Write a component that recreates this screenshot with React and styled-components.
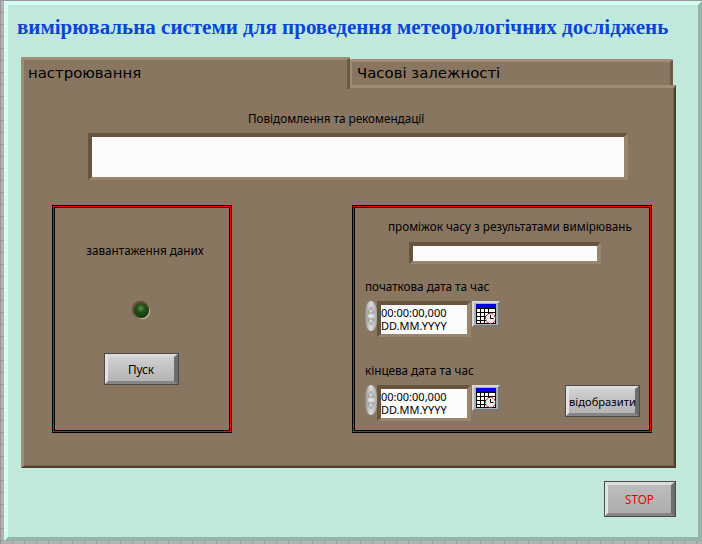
import React from "react";
import styled, { createGlobalStyle } from "styled-components";

const GlobalStyle = createGlobalStyle`
  html, body {
    margin: 0;
    padding: 0;
  }
  body {
    width: 702px;
    height: 544px;
    overflow: hidden;
    background-color: #b3b3b3;
    background-image:
      linear-gradient(#999 1px, transparent 1px),
      linear-gradient(90deg, #999 1px, transparent 1px);
    background-size: 12px 12px;
    font-family: "Noto Sans", Tahoma, sans-serif;
  }
`;

const Window = styled.div`
  box-sizing: border-box;
  width: 698px;
  height: 540px;
  margin: 1px 0 0 4px;
  padding: 0 22px 0 13px;
  display: flex;
  flex-direction: column;
  background: #c0e9dc;
  border-style: solid;
  border-width: 4px;
  border-color: #d2fff1 #93b5a9 #93b5a9 #d2fff1;
`;

const Title = styled.h1`
  height: 52px;
  margin: 0 0 0 -4px;
  padding-top: 10px;
  box-sizing: border-box;
  font: bold 21px "Liberation Serif", serif;
  line-height: 24px;
  color: #0b45d8;
  white-space: nowrap;
`;

const TabRow = styled.div`
  display: flex;
  align-items: flex-end;
  height: 28px;
`;

const Tab = styled.div`
  box-sizing: border-box;
  position: relative;
  z-index: ${(p) => (p.$active ? 1 : 0)};
  width: ${(p) => p.$width}px;
  height: ${(p) => (p.$active ? 32 : 26)}px;
  margin-bottom: ${(p) => (p.$active ? -4 : 0)}px;
  padding-left: ${(p) => (p.$active ? 4 : 5)}px;
  padding-top: ${(p) => (p.$active ? 4 : 2)}px;
  background: #897661;
  border-style: solid;
  border-width: ${(p) => (p.$active ? "3px 3px 0 3px" : "3px 3px 0 2px")};
  border-color: #9f8d75 #6b5a46 #897661 #9f8d75;
  border-radius: 2px 2px 0 0;
  font-family: "DejaVu Sans", sans-serif;
  font-size: 14.9px;
  line-height: 18px;
  color: #000;
`;

const Panel = styled.div`
  box-sizing: border-box;
  width: 655px;
  height: 383px;
  display: flex;
  flex-direction: column;
  background: #897661;
  border-style: solid;
  border-width: 3px 2px 2px 3px;
  border-color: #9f8d75 #4f3f2f #4f3f2f #9f8d75;
  box-shadow: inset -1px -1px 0 #76644f;
`;

const Label = styled.div`
  font-family: "Noto Sans", sans-serif;
  font-size: 11.7px;
  line-height: 14px;
  color: #000;
  white-space: nowrap;
  margin-left: ${(p) => p.$left || 0}px;
  margin-top: ${(p) => p.$top || 0}px;
`;

const Sunken = styled.div`
  box-sizing: border-box;
  width: ${(p) => p.$width}px;
  height: ${(p) => p.$height}px;
  margin-left: ${(p) => p.$left || 0}px;
  margin-top: ${(p) => p.$top || 0}px;
  background: #fbfbfb;
  border-style: solid;
  border-width: 4px 4px 3px 4px;
  border-color: #66543f #98866e #98866e #66543f;
`;

const MessageSection = styled.div`
  display: flex;
  flex-direction: column;
  gap: 8px;
  padding-top: 23px;
`;

const Groups = styled.div`
  display: flex;
  justify-content: space-between;
  width: 600px;
  margin: 25px 0 0 28px;
`;

const Group = styled.div`
  box-sizing: border-box;
  width: ${(p) => p.$width}px;
  height: 228px;
  display: flex;
  flex-direction: column;
  border: 1px solid #000;
  box-shadow: inset 0 0 0 1px #ff0000, inset 0 0 0 2px #000;
`;

const LoadColumn = styled.div`
  display: flex;
  flex-direction: column;
  align-items: center;
  padding: 37px 2px 0 0;
`;

const Led = styled.div`
  width: 15px;
  height: 15px;
  margin-top: 46px;
  border-radius: 50%;
  background: radial-gradient(circle at 45% 35%, #5a9450 0, #245019 30%, #0f3008 90%);
  box-shadow: -1px -1px 1px 1px #5c4a36, 1px 1px 1px 0 #d5c6b2;
`;

const Button = styled.button`
  box-sizing: border-box;
  width: ${(p) => p.$width}px;
  height: ${(p) => p.$height}px;
  padding: 0;
  background: ${(p) => p.$face || "linear-gradient(#d0d0d0, #b4b4b4)"};
  border-style: solid;
  border-width: 4px 5px 4px 4px;
  border-color: #dcdcdc #6c6c6c #858585 #e2e2e2;
  outline: 1px solid #4a4a4a;
  outline-offset: -1px;
  font-family: "Noto Sans", sans-serif;
  font-size: 11.7px;
  color: ${(p) => p.$color || "#000"};
`;

const StartButton = styled(Button)`
  margin: 35px 0 0 1px;
`;

const TimeColumn = styled.div`
  display: flex;
  flex-direction: column;
  padding: 13px 11px 0 12px;
`;

const DateRow = styled.div`
  display: flex;
  align-items: flex-start;
  margin-top: ${(p) => p.$top}px;
`;

const Spinner = styled.div`
  width: 12px;
  height: 30px;
  flex: none;
  display: flex;
  align-items: center;
  justify-content: center;
  border-radius: 6px / 12px;
  background: linear-gradient(90deg, #8c8c8c, #dddddd 45%, #a8a8a8);
`;

const DateField = styled(Sunken)`
  padding: 1px 0 0 0;
  font-family: "Noto Sans", sans-serif;
  font-size: 11px;
  line-height: 13px;
  color: #000;
  white-space: nowrap;
`;

const CalendarButton = styled.div`
  box-sizing: border-box;
  width: 28px;
  height: 26px;
  margin-left: 1px;
  display: flex;
  align-items: center;
  justify-content: center;
  background: #b0b0b0;
  border: 2px solid;
  border-color: #d8d8d8 #777 #777 #d8d8d8;
`;

const ShowButton = styled(Button)`
  margin-left: auto;
  font-size: 11.2px;
`;

const Footer = styled.div`
  display: flex;
  justify-content: flex-end;
  width: 655px;
  padding-top: 13px;
`;

const SpinnerIcon = () => (
  <svg width="8" height="24" viewBox="0 0 8 24">
    <path d="M4 3 L7 9 H1 Z" fill="none" stroke="#9a9a9a" />
    <path d="M1 12 H7" stroke="#f0f0f0" />
    <path d="M4 21 L7 15 H1 Z" fill="none" stroke="#9a9a9a" />
  </svg>
);

const CalendarIcon = () => (
  <svg width="20" height="20" viewBox="0 0 20 20">
    <rect x="0.5" y="0.5" width="19" height="19" fill="#fff" stroke="#000" />
    <rect x="0" y="0" width="20" height="4" fill="#0000e0" />
    <path d="M0 4.5H20M0 8.5H20M0 12.5H20M0 16.5H20M4.5 4V20M8.5 4V20M12.5 4V20" stroke="#000" />
    <circle cx="14.5" cy="14.5" r="5" fill="#ececec" stroke="#b00000" strokeDasharray="2 1" />
    <path d="M14.5 11V14.5H17.5" fill="none" stroke="#000" />
  </svg>
);

const DateTime = () => (
  <>
    <Spinner>
      <SpinnerIcon />
    </Spinner>
    <DateField $width={94} $height={36}>
      00:00:00,000
      <br />
      DD.MM.YYYY
    </DateField>
    <CalendarButton>
      <CalendarIcon />
    </CalendarButton>
  </>
);

export default function App() {
  return (
    <>
      <GlobalStyle />
      <Window>
        <Title>вимірювальна системи для проведення метеорологічних досліджень</Title>
        <TabRow>
          <Tab $active $width={329}>настроювання</Tab>
          <Tab $width={323}>Часові залежності</Tab>
        </TabRow>
        <Panel>
          <MessageSection>
            <Label $left={224}>Повідомлення та рекомендації</Label>
            <Sunken $width={540} $height={47} $left={64} />
          </MessageSection>
          <Groups>
            <Group $width={180}>
              <LoadColumn>
                <Label $left={8}>завантаження даних</Label>
                <Led />
                <StartButton $width={75} $height={32}>Пуск</StartButton>
              </LoadColumn>
            </Group>
            <Group $width={300}>
              <TimeColumn>
                <Label $left={23}>проміжок часу з результатами вимірювань</Label>
                <Sunken $width={192} $height={22} $left={44} $top={9} />
                <Label $top={15}>початкова дата та час</Label>
                <DateRow $top={8}>
                  <DateTime />
                </DateRow>
                <Label $top={26}>кінцева дата та час</Label>
                <DateRow $top={8}>
                  <DateTime />
                  <ShowButton $width={75} $height={32}>відобразити</ShowButton>
                </DateRow>
              </TimeColumn>
            </Group>
          </Groups>
        </Panel>
        <Footer>
          <Button $width={72} $height={36} $color="#f00000" $face="linear-gradient(#bcbcbc, #aeaeae)">STOP</Button>
        </Footer>
      </Window>
    </>
  );
}
